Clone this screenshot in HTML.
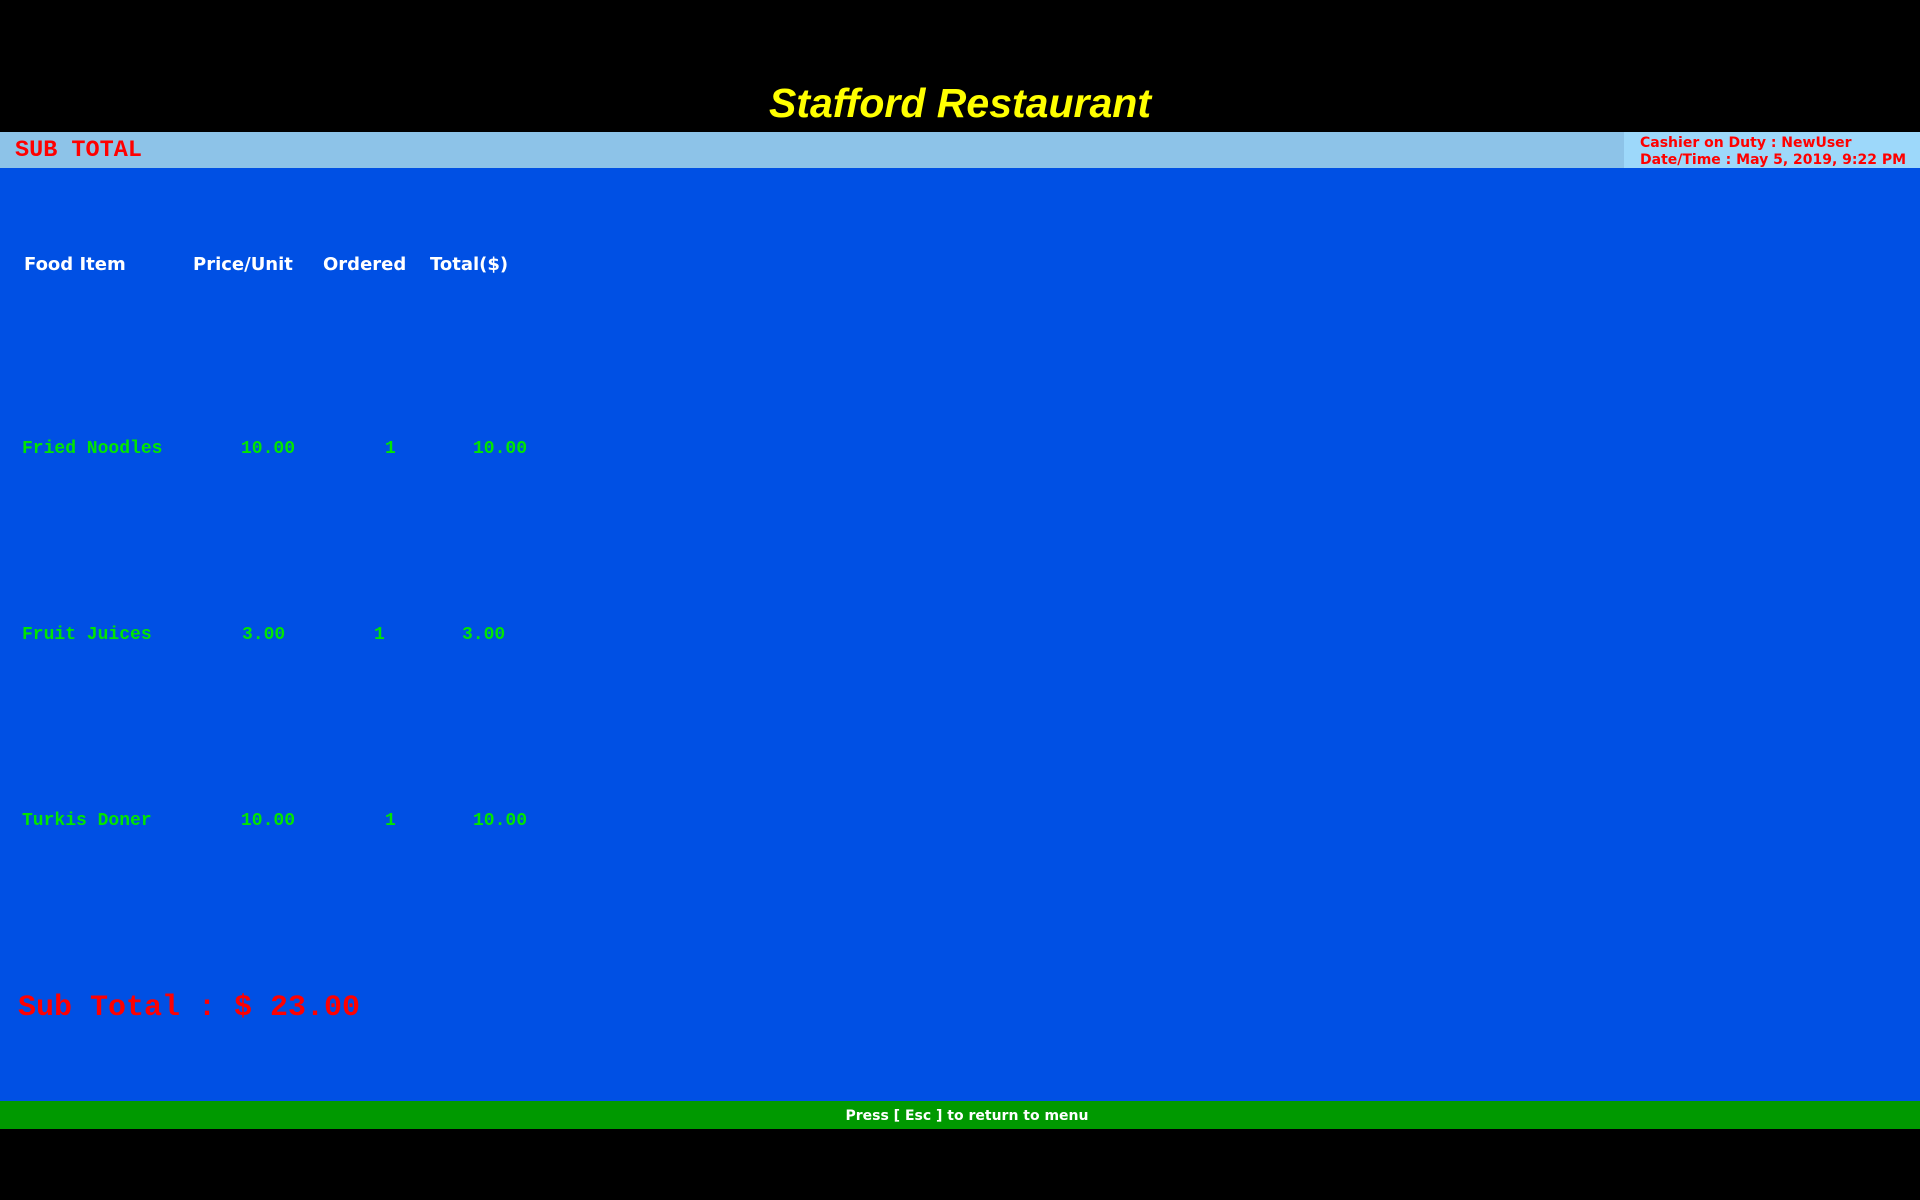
<!DOCTYPE html>
<html><head><meta charset="utf-8"><style>
body{margin:0;width:1920px;height:1200px;background:#000;position:relative;overflow:hidden;font-family:"Liberation Sans",sans-serif}
.a{position:absolute;white-space:pre}
.m{font-family:"Liberation Mono",monospace;color:#00e600;font-size:18px;font-weight:bold;line-height:20px}
.h{color:#fff;font-weight:bold;font-size:18px;line-height:22px;font-family:"DejaVu Sans",sans-serif}
</style></head><body>
<div class="a" style="left:0;top:79px;width:1920px;text-align:center;color:#ffff00;font-weight:bold;font-style:italic;font-size:41px;line-height:48px">Stafford Restaurant</div>
<div class="a" style="left:0;top:132px;width:1624px;height:36px;background:#8dc3e8"></div>
<div class="a" style="left:1624px;top:132px;width:296px;height:36px;background:#9dd8fa"></div>
<div class="a" style="left:15px;top:138px;color:#f00;font-family:'Liberation Mono',monospace;font-weight:bold;font-size:23.5px;line-height:26px">SUB TOTAL</div>
<div class="a" style="left:1640px;top:135px;color:#f00;font-weight:bold;font-size:14px;line-height:17px;font-family:'DejaVu Sans',sans-serif">Cashier on Duty : NewUser<br>Date/Time : May 5, 2019, 9:22 PM</div>
<div class="a" style="left:0;top:168px;width:1920px;height:933px;background:#0050e4"></div>
<div class="a h" style="left:24px;top:254px">Food Item</div>
<div class="a h" style="left:193px;top:254px">Price/Unit</div>
<div class="a h" style="left:323px;top:254px">Ordered</div>
<div class="a h" style="left:430px;top:254px">Total($)</div>
<div class="a m" style="left:22px;top:439px">Fried Noodles</div>
<div class="a m" style="left:241px;top:439px">10.00</div>
<div class="a m" style="left:385px;top:439px">1</div>
<div class="a m" style="left:473px;top:439px">10.00</div>
<div class="a m" style="left:22px;top:625px">Fruit Juices</div>
<div class="a m" style="left:242px;top:625px">3.00</div>
<div class="a m" style="left:374px;top:625px">1</div>
<div class="a m" style="left:462px;top:625px">3.00</div>
<div class="a m" style="left:22px;top:811px">Turkis Doner</div>
<div class="a m" style="left:241px;top:811px">10.00</div>
<div class="a m" style="left:385px;top:811px">1</div>
<div class="a m" style="left:473px;top:811px">10.00</div>
<div class="a" style="left:18px;top:991px;color:#f00;font-family:'Liberation Mono',monospace;font-weight:bold;font-size:30px;line-height:34px">Sub Total : $ 23.00</div>
<div class="a" style="left:0;top:1101px;width:1920px;height:28px;background:#009900;color:#fff;font-weight:bold;font-size:14px;line-height:30px;text-align:center;text-indent:14px;font-family:'DejaVu Sans',sans-serif">Press [ Esc ] to return to menu</div>
</body></html>
